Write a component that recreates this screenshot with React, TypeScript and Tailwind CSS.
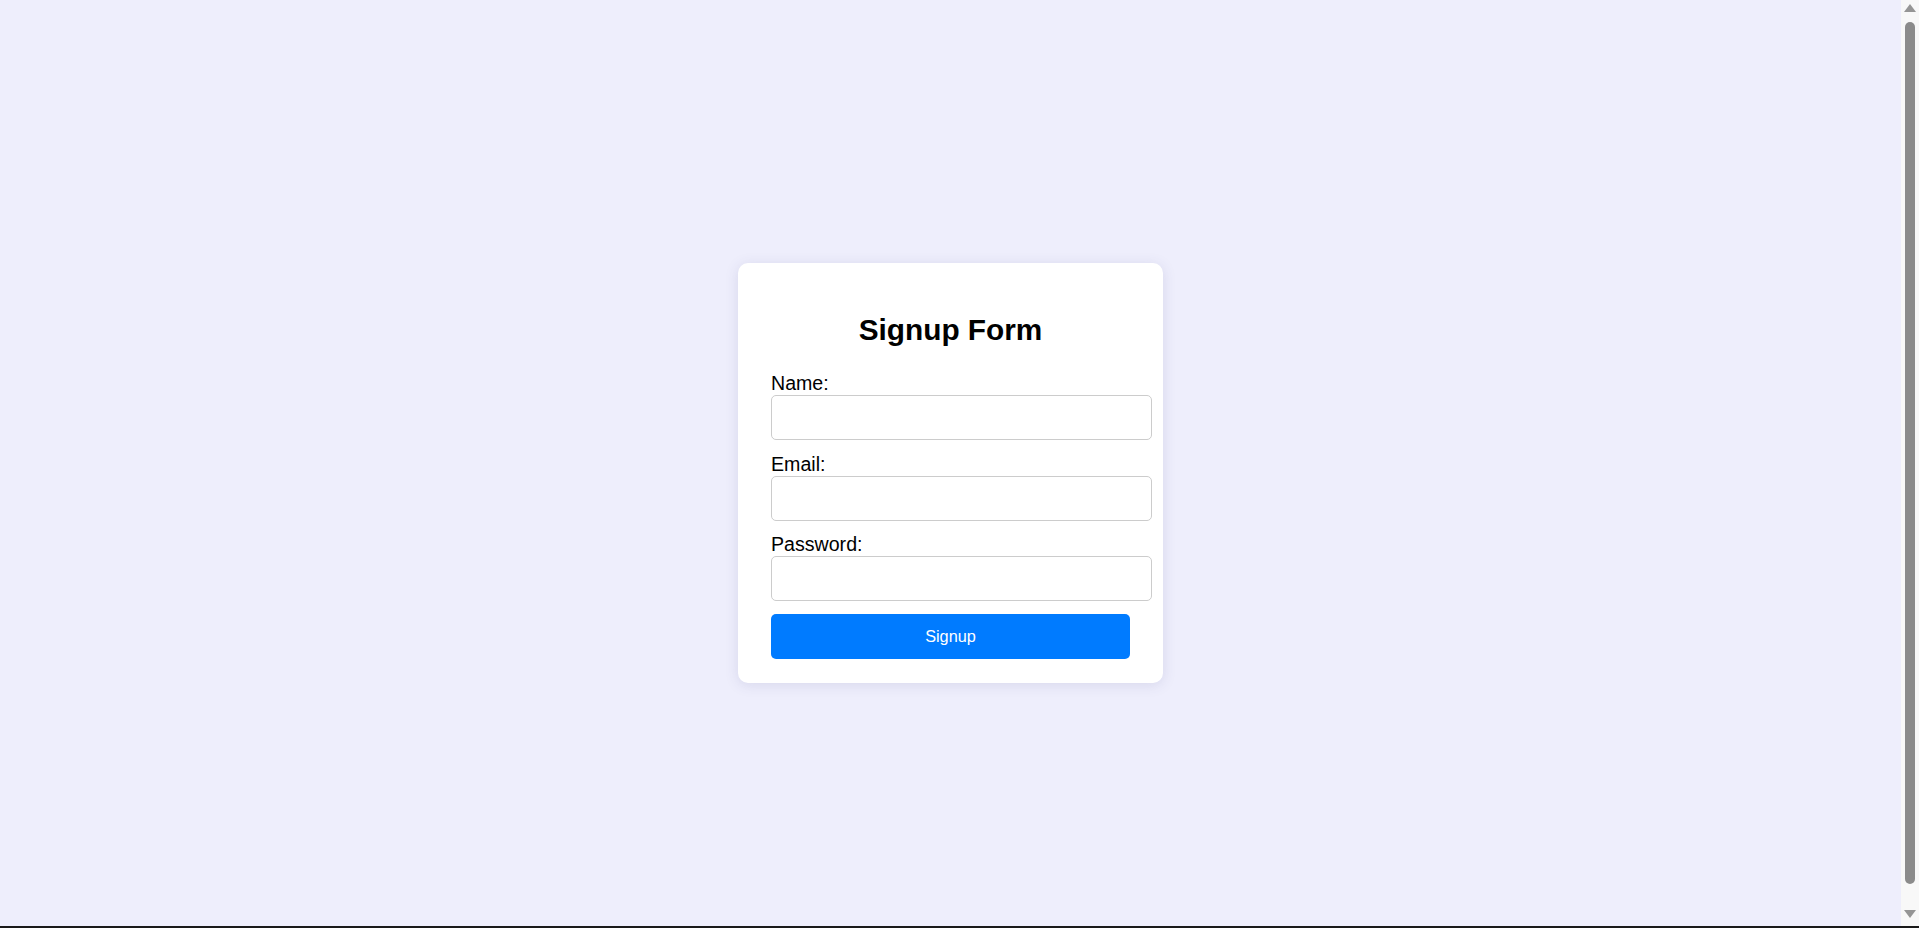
import React from "react";

function Field({ label, type }: { label: string; type: string }) {
  return (
    <div className="flex flex-col">
      <label className="block text-[19.6px] leading-[23px] text-black">{label}</label>
      <input
        type={type}
        className="block w-[381px] h-[45px] mb-[12.5px] border border-[#cccccc] rounded-[5px] px-[10px] bg-white outline-none text-[16px]"
      />
    </div>
  );
}

export default function App() {
  return (
    <div
      className="flex flex-col h-screen w-full overflow-hidden bg-[#eeeefc]"
      style={{ fontFamily: '"Liberation Sans", Arial, sans-serif' }}
    >
      <div className="flex flex-1 min-h-0">
        <main className="flex-1 flex items-center justify-center pt-[20px]">
          <div className="w-[425px] bg-white rounded-[10px] px-[33px] pt-[24px] pb-[24px] shadow-[0_2px_14px_rgba(60,60,120,0.13)]">
            <h2 className="mt-[26px] mb-[25px] text-center text-[29.8px] leading-[34px] font-bold text-black">
              Signup Form
            </h2>
            <form onSubmit={(e) => e.preventDefault()} className="flex flex-col">
              <Field label="Name:" type="text" />
              <Field label="Email:" type="email" />
              <Field label="Password:" type="password" />
              <button
                type="submit"
                className="w-full h-[45px] bg-[#007bff] text-white text-[16.3px] rounded-[5px] flex items-center justify-center"
              >
                Signup
              </button>
            </form>
          </div>
        </main>
        <div className="w-[18px] bg-[#f8f8f8] flex flex-col items-center">
          <svg className="mt-[4px]" width="12" height="8" viewBox="0 0 12 8">
            <polygon points="6,0 12,8 0,8" fill="#959595" />
          </svg>
          <div className="mt-[10px] h-[862px] w-[10px] rounded-full bg-[#8b8b8b]" />
          <svg className="mt-[26px]" width="12" height="8" viewBox="0 0 12 8">
            <polygon points="0,0 12,0 6,8" fill="#959595" />
          </svg>
        </div>
      </div>
      <div className="h-[2px] bg-[#1a1a1a]" />
    </div>
  );
}
